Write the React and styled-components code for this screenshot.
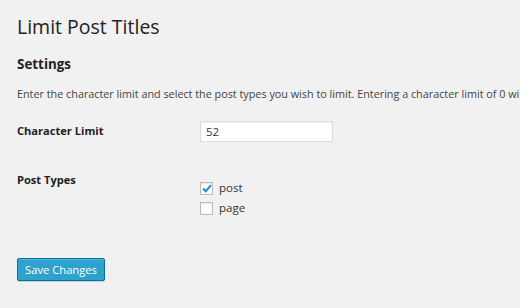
import React from "react";
import styled, { createGlobalStyle } from "styled-components";

const GlobalStyle = createGlobalStyle`
  html, body {
    margin: 0;
    padding: 0;
    background: #f1f1f1;
  }
  body {
    font-family: "Open Sans", "Liberation Sans", sans-serif;
    color: #444;
    overflow: hidden;
  }
`;

const Wrap = styled.div`
  width: 520px;
  height: 308px;
  padding: 14px 0 0 17px;
  box-sizing: border-box;
  white-space: nowrap;
  overflow: hidden;
`;

const Title = styled.h1`
  margin: 0;
  font-size: 19.5px;
  font-weight: 400;
  line-height: 26px;
  color: #222;
`;

const SectionTitle = styled.h2`
  margin: 15px 0 0;
  font-size: 13.4px;
  font-weight: 700;
  line-height: 18px;
  color: #222;
`;

const Description = styled.p`
  margin: 13px 0 0;
  font-size: 10.8px;
  line-height: 16px;
  color: #444;
`;

const FormTable = styled.div`
  display: grid;
  grid-template-columns: 183px 1fr;
  row-gap: 30px;
  margin-top: 19px;
`;

const Label = styled.div`
  font-size: 11.1px;
  font-weight: 700;
  color: #222;
  line-height: 16px;
  padding-top: ${(p) => p.$top || 0}px;
`;

const TextInput = styled.input`
  display: block;
  width: 133px;
  height: 21px;
  box-sizing: border-box;
  border: 1px solid #ddd;
  box-shadow: inset 0 1px 2px rgba(0, 0, 0, 0.07);
  background: #fff;
  font-family: inherit;
  font-size: 11.5px;
  color: #333;
  padding: 0 5px;
  margin: 0;
  outline: none;
`;

const CheckList = styled.div`
  display: flex;
  flex-direction: column;
  gap: 6px;
  padding-top: 9px;
`;

const CheckRow = styled.label`
  display: flex;
  align-items: center;
  gap: 6px;
  font-size: 11.5px;
  color: #333;
  line-height: 14px;
`;

const Box = styled.span`
  width: 13px;
  height: 13px;
  box-sizing: border-box;
  border: 1px solid #bbb;
  background: #fff;
  box-shadow: inset 0 1px 2px rgba(0, 0, 0, 0.1);
  display: flex;
  align-items: center;
  justify-content: center;
`;

const Button = styled.button`
  display: block;
  margin-top: 43px;
  width: 88px;
  height: 23px;
  box-sizing: border-box;
  background: #2ea2cc;
  border: 1px solid #0074a2;
  border-radius: 2px;
  box-shadow: inset 0 1px 0 rgba(120, 200, 230, 0.5), 0 1px 0 rgba(0, 0, 0, 0.15);
  color: #fff;
  font-family: inherit;
  font-size: 11.2px;
  padding: 0;
  cursor: pointer;
`;

const Check = ({ checked }) => (
  <Box>
    {checked && (
      <svg width="10" height="9" viewBox="0 0 10 9">
        <path d="M1 4.5 L3.8 7.2 L9 1.2" fill="none" stroke="#1e8cbe" strokeWidth="2" />
      </svg>
    )}
  </Box>
);

export default function App() {
  return (
    <>
      <GlobalStyle />
      <Wrap>
        <Title>Limit Post Titles</Title>
        <SectionTitle>Settings</SectionTitle>
        <Description>
          Enter the character limit and select the post types you wish to limit. Entering a character limit of 0 will disable the limit.
        </Description>
        <FormTable>
          <Label $top={2}>Character Limit</Label>
          <div>
            <TextInput defaultValue="52" />
          </div>
          <Label>Post Types</Label>
          <CheckList>
            <CheckRow>
              <Check checked />
              post
            </CheckRow>
            <CheckRow>
              <Check />
              page
            </CheckRow>
          </CheckList>
        </FormTable>
        <Button>Save Changes</Button>
      </Wrap>
    </>
  );
}
